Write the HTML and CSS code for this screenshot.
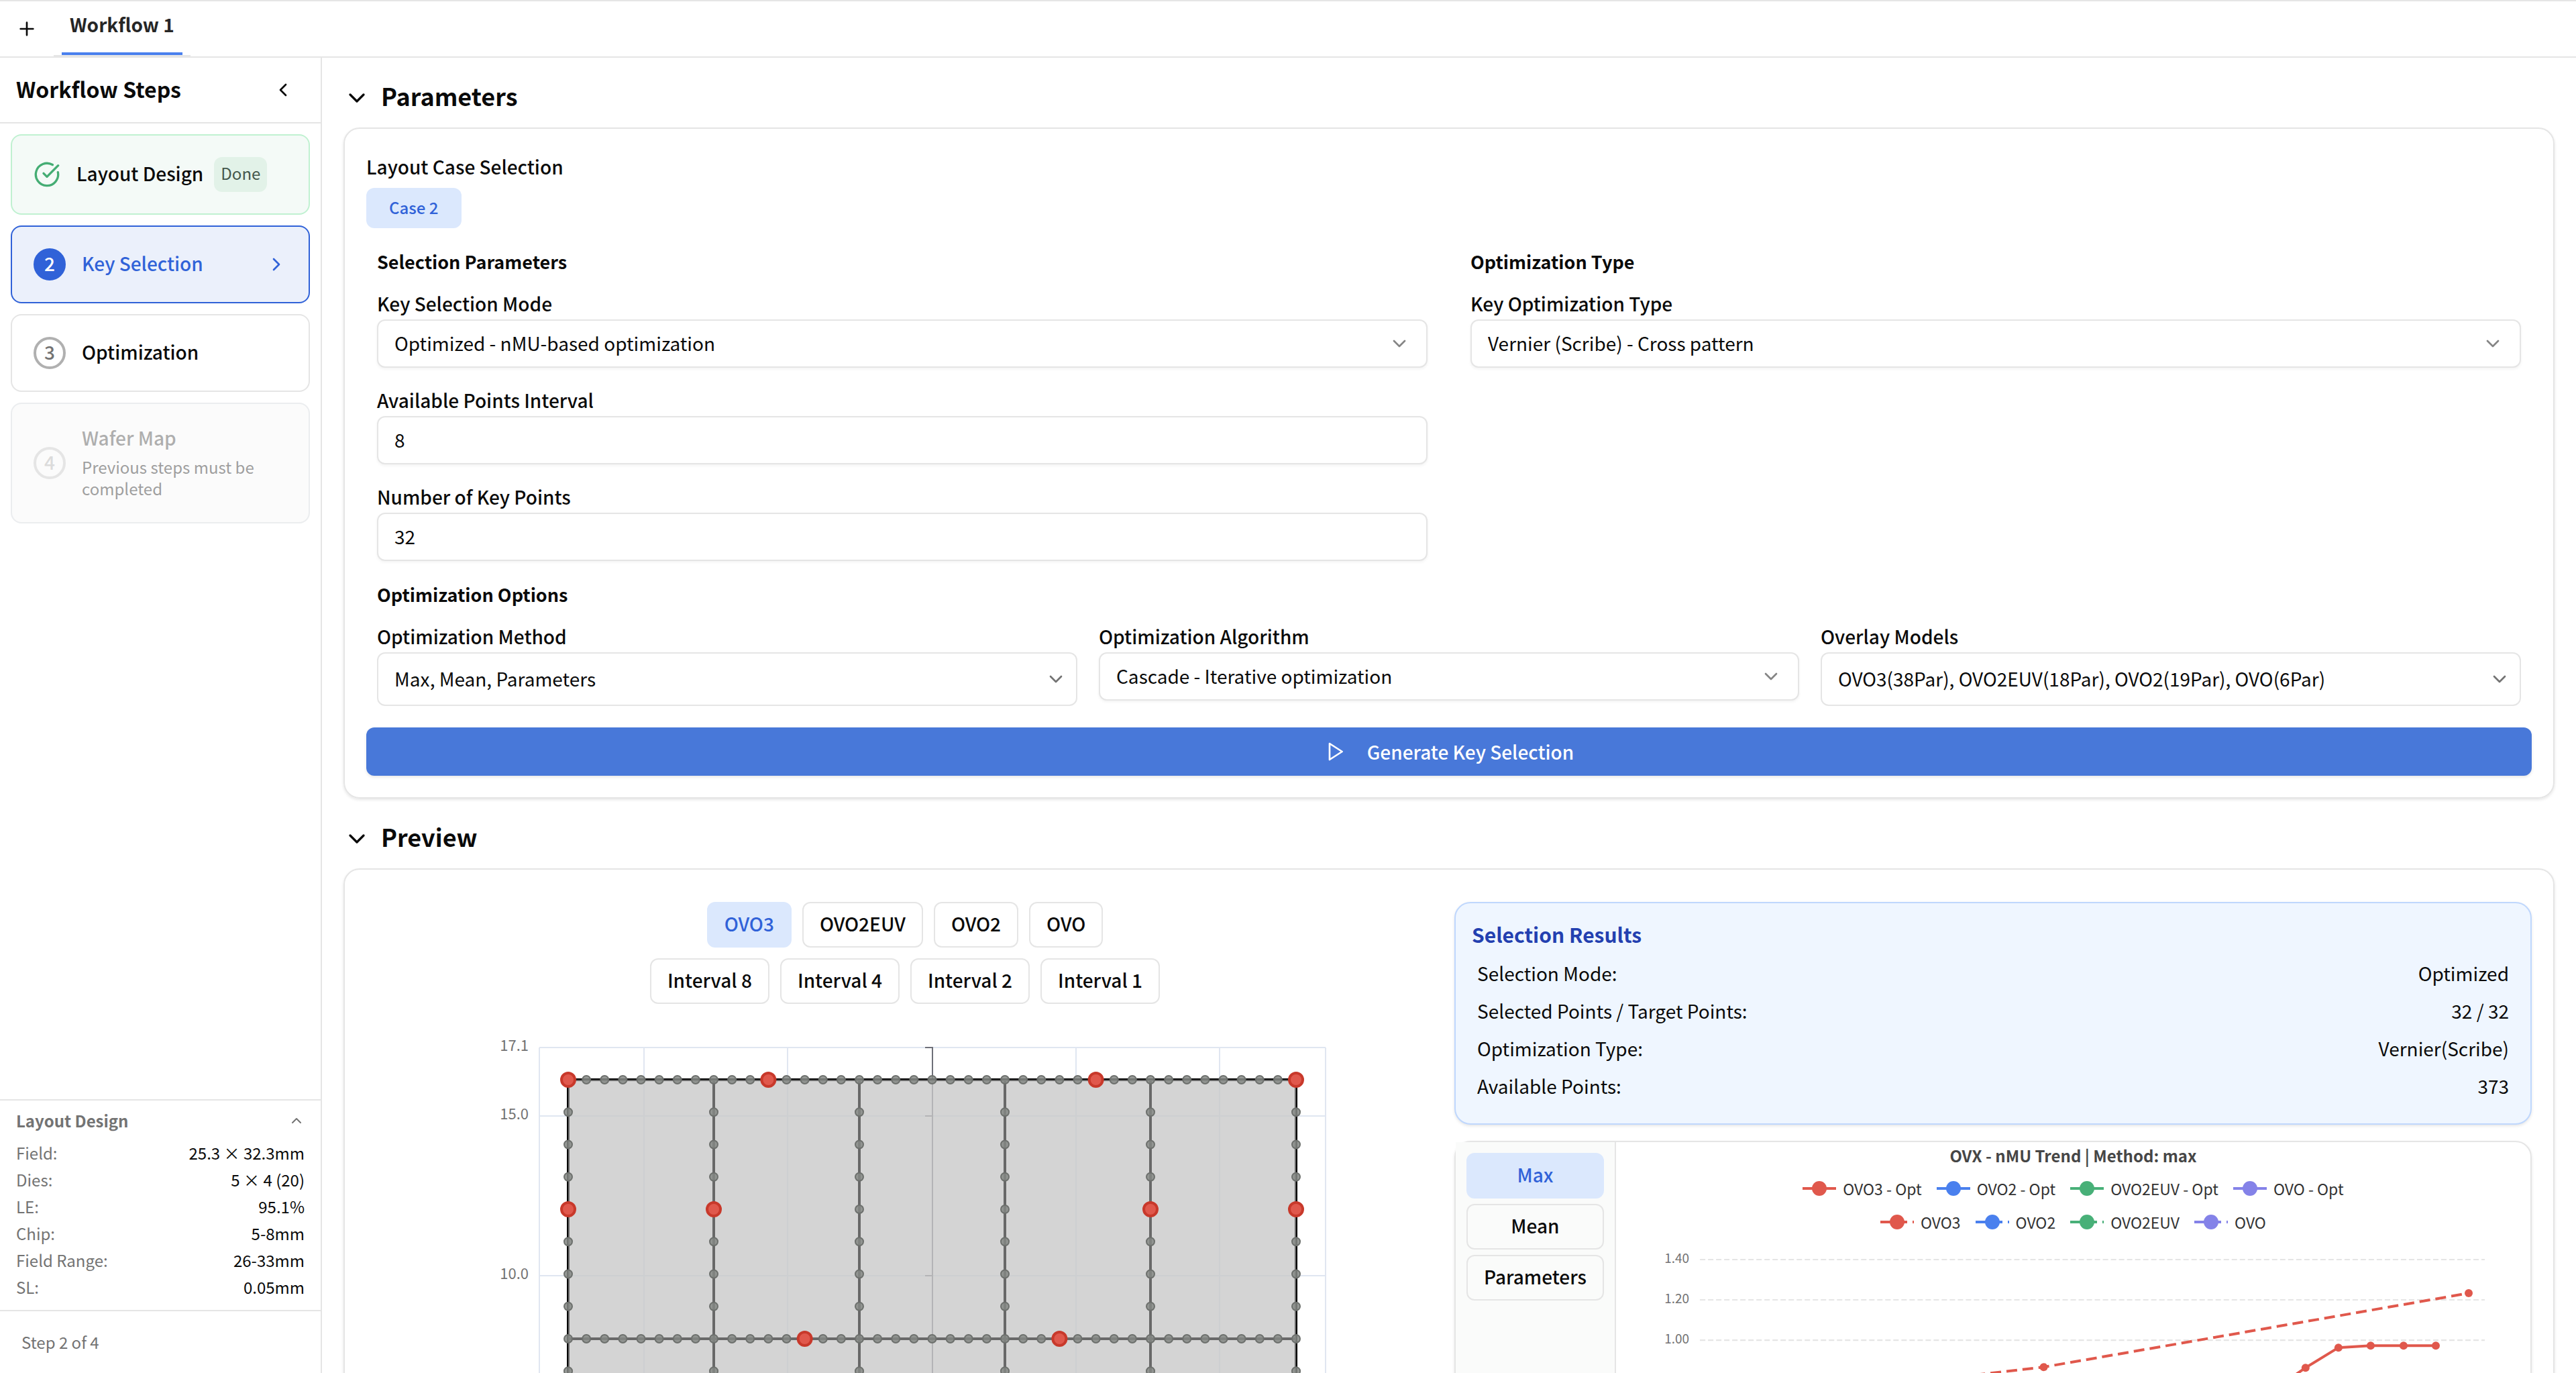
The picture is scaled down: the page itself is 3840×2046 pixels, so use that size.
FILE: index.html
```html
<!DOCTYPE html>
<html lang="en">
<head>
  <meta charset="UTF-8">
  <title>Workflow 1</title>
  <meta name="viewport" content="width=device-width, initial-scale=1.0">
  <link rel="stylesheet" href="styles.css">
</head>
<body>
  <!-- shared icons -->
  <svg class="sprite" aria-hidden="true">
    <symbol id="i-plus" viewBox="0 0 24 24"><path d="M5 12h14M12 5v14"/></symbol>
    <symbol id="i-left" viewBox="0 0 24 24"><path d="m15 18-6-6 6-6"/></symbol>
    <symbol id="i-right" viewBox="0 0 24 24"><path d="m9 18 6-6-6-6"/></symbol>
    <symbol id="i-down" viewBox="0 0 24 24"><path d="m6 9 6 6 6-6"/></symbol>
    <symbol id="i-up" viewBox="0 0 24 24"><path d="m18 15-6-6-6 6"/></symbol>
    <symbol id="i-check" viewBox="0 0 24 24"><path d="M21.801 10A10 10 0 1 1 17 3.335"/><path d="m9 11 3 3L22 4"/></symbol>
    <symbol id="i-play" viewBox="0 0 24 24"><path d="m6 3 14 9-14 9z"/></symbol>
  </svg>

  <div class="app">
    <header class="tabs">
      <button class="tab-add" aria-label="Add workflow"><svg class="icon icon-md"><use href="#i-plus"/></svg></button>
      <div class="tab"><button class="tab-btn">Workflow 1</button></div>
    </header>

    <div class="body">
      <aside class="sidebar">
        <div class="side-head">
          <h2>Workflow Steps</h2>
          <button class="icon-btn" aria-label="Collapse"><svg class="icon icon-md"><use href="#i-left"/></svg></button>
        </div>

        <nav class="steps">
          <button class="step step-done">
            <svg class="icon icon-lg"><use href="#i-check"/></svg>
            <span class="step-name"><span class="step-label">Layout Design</span><span class="badge">Done</span></span>
          </button>
          <button class="step step-active">
            <span class="num">2</span>
            <span class="step-name"><span class="step-label">Key Selection</span></span>
            <svg class="icon icon-md"><use href="#i-right"/></svg>
          </button>
          <button class="step">
            <span class="num">3</span>
            <span class="step-name"><span class="step-label">Optimization</span></span>
          </button>
          <button class="step step-off" disabled>
            <span class="num">4</span>
            <span class="step-text">
              <span class="step-name">Wafer Map</span>
              <span class="step-desc">Previous steps must be completed</span>
            </span>
          </button>
        </nav>

        <section class="summary">
          <div class="summary-head">
            <h3>Layout Design</h3>
            <button class="icon-btn" aria-label="Hide summary"><svg class="icon icon-sm"><use href="#i-up"/></svg></button>
          </div>
          <dl>
            <div><dt>Field:</dt><dd>25.3 × 32.3mm</dd></div>
            <div><dt>Dies:</dt><dd>5 × 4 (20)</dd></div>
            <div><dt>LE:</dt><dd>95.1%</dd></div>
            <div><dt>Chip:</dt><dd>5-8mm</dd></div>
            <div><dt>Field Range:</dt><dd>26-33mm</dd></div>
            <div><dt>SL:</dt><dd>0.05mm</dd></div>
          </dl>
        </section>
        <footer class="side-foot">Step 2 of 4</footer>
      </aside>

      <main class="main">
        <section>
          <button class="section-head"><svg class="icon icon-lg"><use href="#i-down"/></svg><span>Parameters</span></button>
          <div class="card">
            <div class="case-label">Layout Case Selection</div>
            <button class="case-btn">Case 2</button>

            <div class="form-cols">
              <div class="col">
                <h4>Selection Parameters</h4>
                <div class="field">
                  <label for="mode">Key Selection Mode</label>
                  <div class="select">
                    <select id="mode"><option>Optimized - nMU-based optimization</option></select>
                    <svg class="icon icon-md"><use href="#i-down"/></svg>
                  </div>
                </div>
                <div class="field">
                  <label for="interval">Available Points Interval</label>
                  <input id="interval" type="text" value="8">
                </div>
                <div class="field">
                  <label for="points">Number of Key Points</label>
                  <input id="points" type="text" value="32">
                </div>
              </div>
              <div class="col">
                <h4>Optimization Type</h4>
                <div class="field">
                  <label for="type">Key Optimization Type</label>
                  <div class="select">
                    <select id="type"><option>Vernier (Scribe) - Cross pattern</option></select>
                    <svg class="icon icon-md"><use href="#i-down"/></svg>
                  </div>
                </div>
              </div>
            </div>

            <div class="options">
              <h4>Optimization Options</h4>
              <div class="option-cols">
                <div class="field">
                  <label for="method">Optimization Method</label>
                  <div class="select select-multi">
                    <select id="method"><option>Max, Mean, Parameters</option></select>
                    <svg class="icon icon-md"><use href="#i-down"/></svg>
                  </div>
                </div>
                <div class="field">
                  <label for="algo">Optimization Algorithm</label>
                  <div class="select">
                    <select id="algo"><option>Cascade - Iterative optimization</option></select>
                    <svg class="icon icon-md"><use href="#i-down"/></svg>
                  </div>
                </div>
                <div class="field">
                  <label for="models">Overlay Models</label>
                  <div class="select select-multi">
                    <select id="models"><option>OVO3(38Par), OVO2EUV(18Par), OVO2(19Par), OVO(6Par)</option></select>
                    <svg class="icon icon-md"><use href="#i-down"/></svg>
                  </div>
                </div>
              </div>
            </div>

            <button class="generate"><svg class="icon icon-md"><use href="#i-play"/></svg>Generate Key Selection</button>
          </div>
        </section>

        <section>
          <button class="section-head"><svg class="icon icon-lg"><use href="#i-down"/></svg><span>Preview</span></button>
          <div class="card preview">
            <div class="field-view">
              <div class="btn-row">
                <button class="btn btn-on">OVO3</button>
                <button class="btn">OVO2EUV</button>
                <button class="btn">OVO2</button>
                <button class="btn">OVO</button>
              </div>
              <div class="btn-row">
                <button class="btn">Interval 8</button>
                <button class="btn">Interval 4</button>
                <button class="btn">Interval 2</button>
                <button class="btn">Interval 1</button>
              </div>
              <svg class="field-map" id="fieldMap" viewBox="0 0 1606 1340"></svg>
            </div>

            <div class="results-col">
              <div class="results">
                <h3>Selection Results</h3>
                <dl>
                  <div><dt>Selection Mode:</dt><dd>Optimized</dd></div>
                  <div><dt>Selected Points / Target Points:</dt><dd>32 / 32</dd></div>
                  <div><dt>Optimization Type:</dt><dd>Vernier(Scribe)</dd></div>
                  <div><dt>Available Points:</dt><dd>373</dd></div>
                </dl>
              </div>
              <div class="trend">
                <div class="trend-tabs">
                  <button class="btn btn-on">Max</button>
                  <button class="btn">Mean</button>
                  <button class="btn">Parameters</button>
                </div>
                <div class="trend-chart">
                  <div class="trend-title">OVX - nMU Trend | Method: max</div>
                  <div class="legend" id="legendOpt"></div>
                  <div class="legend" id="legendBase"></div>
                  <svg class="trend-plot" id="trendPlot" viewBox="0 0 1362 640"></svg>
                </div>
              </div>
            </div>
          </div>
        </section>
      </main>
    </div>
  </div>

  <script src="script.js"></script>
</body>
</html>
```
FILE: styles.css
```css
* { box-sizing: border-box; }

body {
  margin: 0;
  color: #0a0a0a;
  background: #fff;
  font-family: "Noto Sans CJK KR", "Noto Sans", sans-serif;
  font-size: 28px;
  line-height: 40px;
}

h2, h3, h4, dl, dd { margin: 0; }

button, input, select {
  font: inherit;
  color: inherit;
}

button {
  margin: 0;
  padding: 0;
  border: none;
  background: none;
  cursor: pointer;
}

.sprite {
  position: absolute;
  width: 0;
  height: 0;
}

.icon {
  flex: none;
  fill: none;
  stroke: currentColor;
  stroke-width: 2px;
  stroke-linecap: round;
  stroke-linejoin: round;
}
.icon-sm { width: 24px; height: 24px; }
.icon-md { width: 32px; height: 32px; }
.icon-lg { width: 40px; height: 40px; }
.icon-btn { display: flex; }

.app {
  height: 100vh;
  display: flex;
  flex-direction: column;
  overflow: hidden;
  border-top: 2px solid #e5e5e5;
}

/* tabs */
.tabs {
  flex: none;
  height: 84px;
  display: flex;
  align-items: flex-end;
  border-bottom: 2px solid #e5e5e5;
}
.tab-add {
  display: flex;
  align-self: center;
  padding: 0 24px;
}
.tab {
  height: 82px;
  padding: 0 12px;
  border-bottom: 2px solid #e5e5e5;
}
.tab-btn {
  height: 80px;
  padding: 0 12px 8px;
  font-weight: 700;
  color: #262626;
  border-bottom: 4px solid #4a80ee;
}

.body {
  flex: 1;
  min-height: 0;
  display: flex;
}

/* sidebar */
.sidebar {
  flex: none;
  width: 480px;
  display: flex;
  flex-direction: column;
  border-right: 2px solid #e5e5e5;
}
.side-head {
  display: flex;
  align-items: center;
  justify-content: space-between;
  height: 98px;
  padding: 0 40px 0 24px;
  border-bottom: 2px solid #e5e5e5;
}
.side-head h2 {
  padding-bottom: 4px;
  font-size: 32px;
  line-height: 48px;
}

.steps {
  flex: 1;
  display: flex;
  flex-direction: column;
  gap: 16px;
  padding: 16px;
}
.step {
  display: flex;
  align-items: center;
  gap: 24px;
  padding: 32px;
  text-align: left;
  border: 2px solid #e5e5e5;
  border-radius: 16px;
}
.step-name {
  flex: 1;
  display: flex;
  align-items: center;
  gap: 16px;
  font-weight: 500;
}
.step-label { padding-bottom: 4px; }
.num {
  flex: none;
  display: flex;
  align-items: center;
  justify-content: center;
  width: 48px;
  height: 48px;
  padding-bottom: 4px;
  font-weight: 500;
  color: #737373;
  border: 4px solid #b0b0b0;
  border-radius: 50%;
}
.step-done { background: #f4faf7; border-color: #c0f1d1; }
.step-done .icon { color: #45ad74; }
.badge {
  padding: 4px 10px 8px;
  font-size: 24px;
  font-weight: 400;
  color: #44574c;
  background: #e2f2e8;
  border-radius: 12px;
}
.step-active { color: #3062d8; background: #ebf0fb; border-color: #3062d8; }
.step-active .num { color: #fff; background: #3062d8; border-color: #3062d8; }
.step-off { background: #f8f8f8; border-color: #d8dce0; opacity: 0.5; cursor: default; }
.step-off .num { color: #b8b8b8; border-color: #ccc; }
.step-text {
  display: flex;
  flex-direction: column;
  gap: 8px;
  margin: -2px 0 2px;
}
.step-off .step-name { color: #606060; }
.step-desc { font-size: 24px; line-height: 32px; color: #404040; }

.summary {
  padding: 14px 24px 18px;
  font-size: 24px;
  line-height: 32px;
  border-top: 2px solid #e5e5e5;
}
.summary-head {
  display: flex;
  align-items: center;
  justify-content: space-between;
  margin-bottom: 16px;
  color: #737373;
}
.summary-head h3 { font-size: 24px; }
.summary dl { display: flex; flex-direction: column; gap: 8px; }
.summary dl div { display: flex; justify-content: space-between; }
.summary dt { color: #737373; }
.side-foot {
  padding: 30px 32px;
  font-size: 24px;
  line-height: 32px;
  color: #737373;
  border-top: 2px solid #e5e5e5;
}

/* main */
.main {
  flex: 1;
  min-width: 0;
  display: flex;
  flex-direction: column;
  gap: 32px;
  padding: 32px;
  overflow: hidden;
}
.section-head {
  display: flex;
  align-items: center;
  gap: 16px;
  margin-bottom: 16px;
  font-size: 36px;
  line-height: 48px;
  font-weight: 700;
}
.section-head span { padding-bottom: 8px; }
.card {
  padding: 32px;
  border: 2px solid #e5e5e5;
  border-radius: 24px;
  box-shadow: 0 2px 4px rgba(0, 0, 0, 0.1);
}

/* form */
.case-label { line-height: 48px; margin-bottom: 8px; font-weight: 500; }
.case-btn {
  height: 60px;
  padding: 0 34px 2px;
  font-size: 24px;
  font-weight: 500;
  color: #3062d8;
  background: #dbe8fd;
  border-radius: 12px;
}
h4 {
  margin-bottom: 20px;
  font-size: 27px;
  line-height: 44px;
  font-weight: 700;
}
.form-cols {
  display: grid;
  grid-template-columns: 1fr 1fr;
  gap: 64px;
  padding: 28px 16px 0;
}
.field { display: flex; flex-direction: column; }
.col .field + .field { margin-top: 28px; }
.field label { line-height: 40px; margin-bottom: 4px; font-weight: 500; }
.field input, .field select {
  width: 100%;
  height: 72px;
  padding: 0 24px 2px;
  background: #fff;
  border: 2px solid #e5e5e5;
  border-radius: 12px;
  box-shadow: 0 2px 4px rgba(0, 0, 0, 0.05);
}
.select { display: grid; align-items: center; }
.select select { grid-area: 1 / 1; appearance: none; }
.select .icon {
  grid-area: 1 / 1;
  justify-self: end;
  margin-right: 26px;
  color: #858585;
  pointer-events: none;
}
.select-multi select { height: 80px; box-shadow: none; }
.select-multi .icon { margin-right: 16px; color: #737373; }
.options { padding: 28px 16px 32px; }
.option-cols {
  display: grid;
  grid-template-columns: repeat(3, 1fr);
  gap: 32px;
  align-items: start;
}
.generate {
  display: flex;
  align-items: center;
  justify-content: center;
  gap: 32px;
  width: 100%;
  height: 72px;
  font-weight: 500;
  color: #fff;
  background: #4878d9;
  border-radius: 12px;
  box-shadow: 0 2px 4px rgba(0, 0, 0, 0.1);
}

/* preview */
.preview {
  display: grid;
  grid-template-columns: 1fr 1fr;
  gap: 16px;
  padding-top: 48px;
}
.btn {
  height: 68px;
  padding: 0 24px 4px;
  font-weight: 500;
  border: 2px solid #e5e5e5;
  border-radius: 12px;
}
.btn-on { color: #3062d8; background: #dbe8fd; border-color: #dbe8fd; }
.btn-row {
  display: flex;
  justify-content: center;
  gap: 16px;
  margin-bottom: 16px;
}
.field-map { display: block; width: 100%; }
.field-map text, .trend-plot text { fill: #737373; text-anchor: end; }
.field-map text { font-size: 22px; }
.grid-line { stroke: #e0e6f1; stroke-width: 2; }
.axis-line { stroke: #6e7079; stroke-width: 2; }
.field-area { fill: #c8c8c8; fill-opacity: 0.78; stroke: #000; stroke-width: 4; }
.die { fill: none; stroke: #686868; stroke-width: 2; }
.pt { fill: #858885; fill-opacity: 0.85; stroke: #6d706d; stroke-width: 2; }
.pt-key { fill: #e0584c; stroke: #c8392b; stroke-width: 4; }

.results-col { display: flex; flex-direction: column; gap: 24px; }
.results {
  height: 332px;
  padding: 24px;
  background: #eff6ff;
  border: 2px solid #bfd7fd;
  border-radius: 24px;
  box-shadow: 0 2px 4px rgba(0, 0, 0, 0.1);
}
.results h3 { font-size: 30px; line-height: 44px; color: #2340b0; margin-bottom: 8px; }
.results dl div {
  display: flex;
  justify-content: space-between;
  padding: 8px;
}

.trend {
  flex: 1;
  display: flex;
  border: 2px solid #e5e5e5;
  border-radius: 24px;
  box-shadow: 0 2px 4px rgba(0, 0, 0, 0.1);
}
.trend-tabs {
  flex: none;
  display: flex;
  flex-direction: column;
  gap: 8px;
  padding: 16px;
  background: #fafbfa;
  border-right: 2px solid #e5e5e5;
}
.trend-chart { flex: 1; min-width: 0; }
.trend-title {
  text-align: center;
  font-size: 24px;
  font-weight: 700;
  color: #464646;
}
.legend {
  display: flex;
  justify-content: center;
  gap: 22px;
  height: 50px;
  padding-top: 8px;
  font-size: 23px;
  line-height: 40px;
  color: #333;
}
.legend span { display: flex; align-items: center; gap: 10px; }
.legend svg { width: 50px; height: 24px; }
.trend-plot { display: block; width: 100%; }
.trend-plot text { font-size: 19px; }
.split-line { stroke: #e5e5e5; stroke-width: 2; stroke-dasharray: 8 4; }
.series { fill: none; stroke: #e0584c; stroke-width: 4; }
.series-base { stroke-dasharray: 16 8; }
.series-pt { fill: #e0584c; }
```
FILE: script.js
```javascript
const NS = 'http://www.w3.org/2000/svg';

function add(parent, tag, attrs, text) {
  const el = document.createElementNS(NS, tag);
  for (const k in attrs) el.setAttribute(k, attrs[k]);
  if (text) el.textContent = text;
  parent.appendChild(el);
  return el;
}

function line(parent, cls, x1, y1, x2, y2) {
  return add(parent, 'line', { class: cls, x1, y1, x2, y2 });
}

// field map: 5 dies across, 8 steps along each die edge
function drawField() {
  const svg = document.getElementById('fieldMap');
  const left = 258, right = 1430, top = 49, bottom = 1340;
  const fx = 301, fy = 97, dieW = 217, dieH = 386;
  const cols = 5, rows = 3, steps = 8;

  [left, 414, 628, 1058, 1272, right].forEach(x => line(svg, 'grid-line', x, top, x, bottom));
  [[top, '17.1'], [151, '15.0'], [389, '10.0']].forEach(([y, label]) => {
    line(svg, 'grid-line', left, y, right, y);
    line(svg, 'axis-line', 833, y, 844, y);
    add(svg, 'text', { x: 242, y: y + 5 }, label);
  });
  line(svg, 'axis-line', 844, top - 1, 844, bottom);

  add(svg, 'rect', { class: 'field-area', x: fx, y: fy, width: dieW * cols, height: dieH * rows });
  for (let c = 0; c < cols; c++) {
    for (let r = 0; r < rows; r++) {
      add(svg, 'rect', {
        class: 'die',
        x: fx + c * dieW + 1,
        y: fy + r * dieH + 1,
        width: dieW - 2,
        height: dieH - 2
      });
    }
  }

  const keys = ['0,0', '11,0', '29,0', '40,0', '0,4', '8,4', '32,4', '40,4', '13,8', '27,8'];
  for (let j = 0; j <= rows * steps; j++) {
    for (let i = 0; i <= cols * steps; i++) {
      if (i % steps && j % steps) continue;
      const key = keys.includes(i + ',' + j);
      add(svg, 'circle', {
        class: key ? 'pt-key' : 'pt',
        cx: fx + i * dieW / steps,
        cy: fy + j * dieH / steps,
        r: key ? 10 : 6
      });
    }
  }
}

const series = [
  ['OVO3', '#e0584c'],
  ['OVO2', '#4a80ee'],
  ['OVO2EUV', '#48b078'],
  ['OVO', '#8482e8']
];

function drawLegend(id, suffix, dash) {
  const box = document.getElementById(id);
  series.forEach(([name, color]) => {
    const item = document.createElement('span');
    const svg = add(item, 'svg', { viewBox: '0 0 50 24' });
    const l = add(svg, 'line', { x1: 0, y1: 12, x2: 50, y2: 12, stroke: color, 'stroke-width': 4 });
    if (dash) l.setAttribute('stroke-dasharray', '40 8');
    add(svg, 'circle', { cx: 25, cy: 12, r: 11, fill: color });
    item.append(name + suffix);
    box.appendChild(item);
  });
}

function drawTrend() {
  const svg = document.getElementById('trendPlot');
  [[35, '1.40'], [95, '1.20'], [155, '1.00']].forEach(([y, label]) => {
    line(svg, 'split-line', 125, y, 1294, y);
    add(svg, 'text', { x: 109, y: y + 5 }, label);
  });
  const opt = [[978, 230], [1027, 196], [1076, 166], [1124, 163], [1173, 163], [1221, 163]];
  const base = [[200, 245], [637, 195], [1270, 85]];
  add(svg, 'polyline', { class: 'series', points: opt.join(' ') });
  add(svg, 'polyline', { class: 'series series-base', points: base.join(' ') });
  opt.concat(base).forEach(([cx, cy]) => add(svg, 'circle', { class: 'series-pt', cx, cy, r: 6 }));
}

drawField();
drawLegend('legendOpt', ' - Opt', false);
drawLegend('legendBase', '', true);
drawTrend();
```
